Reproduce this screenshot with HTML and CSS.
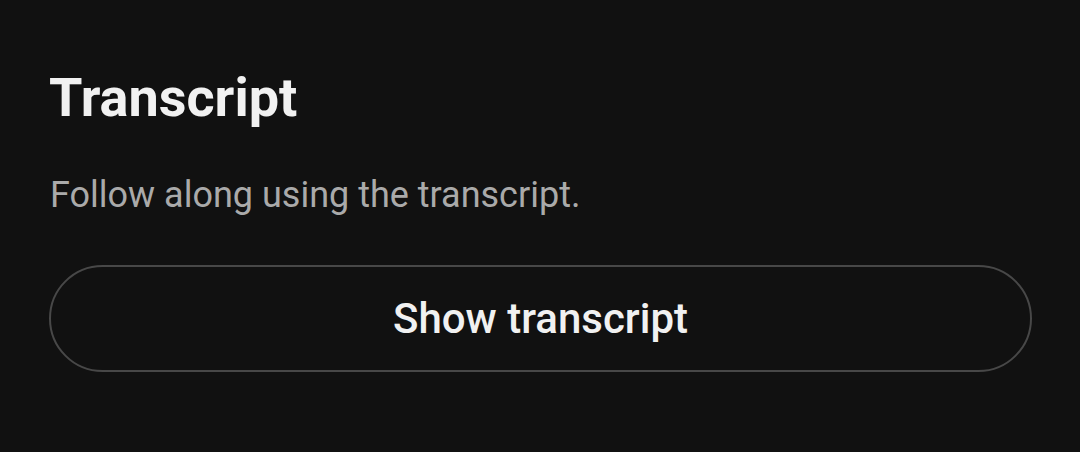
FILE: index.html
```html
<!DOCTYPE html>
<html lang="en">
<head>
    <meta charset="UTF-8">
    <title>Transcript</title>
    <link rel="stylesheet" href="styles.css">
</head>
<body>
    <div class="panel">
        <h2 class="panel-title">Transcript</h2>
        <p class="panel-text">Follow along using the transcript.</p>
        <button class="transcript-btn">Show transcript</button>
    </div>
</body>
</html>
```

FILE: styles.css
```css
* {
    box-sizing: border-box;
}

body {
    margin: 0;
    height: 100vh;
    font-family: Roboto, "Liberation Sans", sans-serif;
    background-color: #111111;
}

.panel {
    display: flex;
    flex-direction: column;
    padding: 66px 49px 0 49px;
}

.panel-title {
    margin: 0;
    font-size: 54px;
    font-weight: bold;
    line-height: 64px;
    color: #f1f1f1;
}

.panel-text {
    margin: 41px 0 0 1px;
    font-size: 36px;
    line-height: 48px;
    color: #aaaaaa;
}

.transcript-btn {
    margin-top: 46px;
    height: 107px;
    width: 983px;
    border: 2px solid #484848;
    border-radius: 54px;
    background-color: transparent;
    color: #f1f1f1;
    font-family: Roboto, "Liberation Sans", sans-serif;
    font-size: 42px;
    font-weight: 500;
    cursor: pointer;
}
```
